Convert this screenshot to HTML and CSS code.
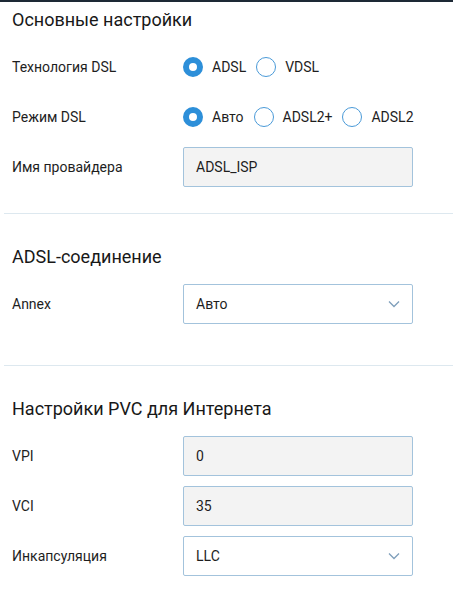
FILE: index.html
```html
<!DOCTYPE html>
<html lang="ru">
<head>
<meta charset="utf-8">
<link rel="stylesheet" href="styles.css">
</head>
<body>
<div class="page">
  <section class="section section-first">
    <h2 class="title">Основные настройки</h2>
    <div class="rows">
      <div class="row">
        <div class="label">Технология DSL</div>
        <div class="radios">
          <span class="radio checked"></span><span class="rtext">ADSL</span>
          <span class="radio"></span><span class="rtext">VDSL</span>
        </div>
      </div>
      <div class="row">
        <div class="label">Режим DSL</div>
        <div class="radios">
          <span class="radio checked"></span><span class="rtext">Авто</span>
          <span class="radio"></span><span class="rtext">ADSL2+</span>
          <span class="radio"></span><span class="rtext">ADSL2</span>
        </div>
      </div>
      <div class="row">
        <div class="label">Имя провайдера</div>
        <div class="field input">ADSL_ISP</div>
      </div>
    </div>
  </section>
  <hr class="divider">
  <section class="section">
    <h2 class="title">ADSL-соединение</h2>
    <div class="rows">
      <div class="row">
        <div class="label">Annex</div>
        <div class="field select">
          <span>Авто</span>
          <svg class="chev" width="12" height="8" viewBox="0 0 12 8"><path d="M1 1.5 L6 6.5 L11 1.5" fill="none" stroke="#7f9fbb" stroke-width="1.3"/></svg>
        </div>
      </div>
    </div>
  </section>
  <hr class="divider divider-2">
  <section class="section">
    <h2 class="title">Настройки PVC для Интернета</h2>
    <div class="rows">
      <div class="row">
        <div class="label">VPI</div>
        <div class="field input">0</div>
      </div>
      <div class="row">
        <div class="label">VCI</div>
        <div class="field input">35</div>
      </div>
      <div class="row">
        <div class="label">Инкапсуляция</div>
        <div class="field select">
          <span>LLC</span>
          <svg class="chev" width="12" height="8" viewBox="0 0 12 8"><path d="M1 1.5 L6 6.5 L11 1.5" fill="none" stroke="#7f9fbb" stroke-width="1.3"/></svg>
        </div>
      </div>
    </div>
  </section>
</div>
</body>
</html>
```
FILE: styles.css
```css
html, body {
  margin: 0;
  padding: 0;
  background: #ffffff;
}
body {
  font-family: Roboto, "Liberation Sans", sans-serif;
  color: #1e1e1e;
  width: 453px;
  height: 604px;
  overflow: hidden;
}
.page {
  border-top: 2px solid #1d2935;
}
.section {
  padding: 31px 0 0 12px;
}
.section-first {
  padding-top: 6px;
}
.title {
  margin: 0 0 15px 0;
  font-size: 18px;
  font-weight: 400;
  line-height: 24px;
  color: #181818;
}
.rows {
  display: flex;
  flex-direction: column;
  gap: 10px;
}
.row {
  display: grid;
  grid-template-columns: 171px 230px;
  align-items: center;
  height: 40px;
}
.label {
  font-size: 14px;
  color: #1e1e1e;
}
.radios {
  display: flex;
  align-items: center;
}
.radio {
  width: 20px;
  height: 20px;
  box-sizing: border-box;
  border-radius: 50%;
  border: 1px solid #4a9ad8;
  background: #fff;
  flex: none;
}
.radio.checked {
  border: 6px solid #2d8fd9;
}
.rtext {
  font-size: 14px;
  color: #1e1e1e;
  margin-left: 9px;
  margin-right: 10px;
}
.field {
  box-sizing: border-box;
  height: 40px;
  border: 1px solid #a3c3dc;
  border-radius: 2px;
  padding: 0 12px;
  font-size: 14px;
  color: #1e1e1e;
  display: flex;
  align-items: center;
}
.input {
  background: #f3f3f3;
}
.select {
  background: #ffffff;
  justify-content: space-between;
}
.chev {
  display: block;
}
.divider {
  margin: 26px 0 0 4px;
  border: 0;
  height: 1px;
  background: #dde8ef;
}
.divider-2 {
  margin-top: 41px;
}
```
